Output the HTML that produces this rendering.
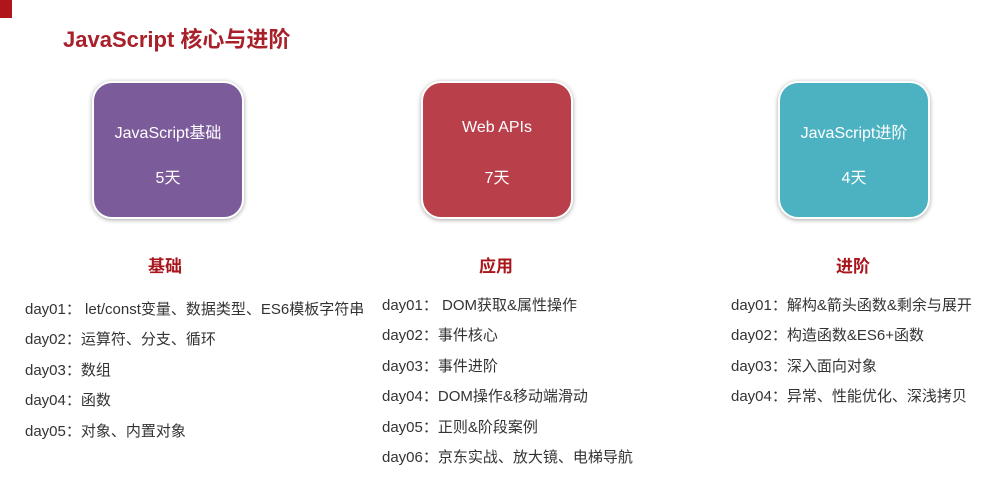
<!DOCTYPE html>
<html><head><meta charset="utf-8"><style>
body{margin:0;width:993px;height:480px;background:#fff;position:relative;overflow:hidden;font-family:"Liberation Sans","Noto Sans CJK SC",sans-serif}
.a{position:absolute}
.box{position:absolute;top:81px;width:148px;height:134px;border-radius:20px;border:2px solid #fff;box-shadow:0 1px 5px rgba(0,0,0,.35);color:#fff;font-size:16px;text-align:center}
.box div{position:absolute;left:0;right:0}
.h{position:absolute;top:252px;color:#a8161c;font-weight:bold;font-size:17px}
.l{position:absolute;font-size:15px;color:#333;line-height:30.4px;white-space:nowrap}
</style></head><body>
<div class="a" style="left:0;top:0;width:12px;height:18px;background:#b0151c"></div>
<div class="a" style="left:63px;top:22px;font-size:22px;font-weight:bold;color:#a8202a">JavaScript 核心与进阶</div>
<div class="box" style="left:92px;background:#7c5b9b"><div style="top:36px">JavaScript基础</div><div style="top:81px">5天</div></div>
<div class="box" style="left:421px;background:#b9404a"><div style="top:36px">Web APIs</div><div style="top:81px">7天</div></div>
<div class="box" style="left:778px;background:#4cb2c2"><div style="top:36px">JavaScript进阶</div><div style="top:81px">4天</div></div>
<div class="h" style="left:148px">基础</div>
<div class="h" style="left:479px">应用</div>
<div class="h" style="left:836px">进阶</div>
<div class="l" style="left:25px;top:295px">day01： let/const变量、数据类型、ES6模板字符串<br>day02：运算符、分支、循环<br>day03：数组<br>day04：函数<br>day05：对象、内置对象</div>
<div class="l" style="left:382px;top:291px">day01： DOM获取&amp;属性操作<br>day02：事件核心<br>day03：事件进阶<br>day04：DOM操作&amp;移动端滑动<br>day05：正则&amp;阶段案例<br>day06：京东实战、放大镜、电梯导航</div>
<div class="l" style="left:731px;top:291px">day01：解构&amp;箭头函数&amp;剩余与展开<br>day02：构造函数&amp;ES6+函数<br>day03：深入面向对象<br>day04：异常、性能优化、深浅拷贝</div>
</body></html>
